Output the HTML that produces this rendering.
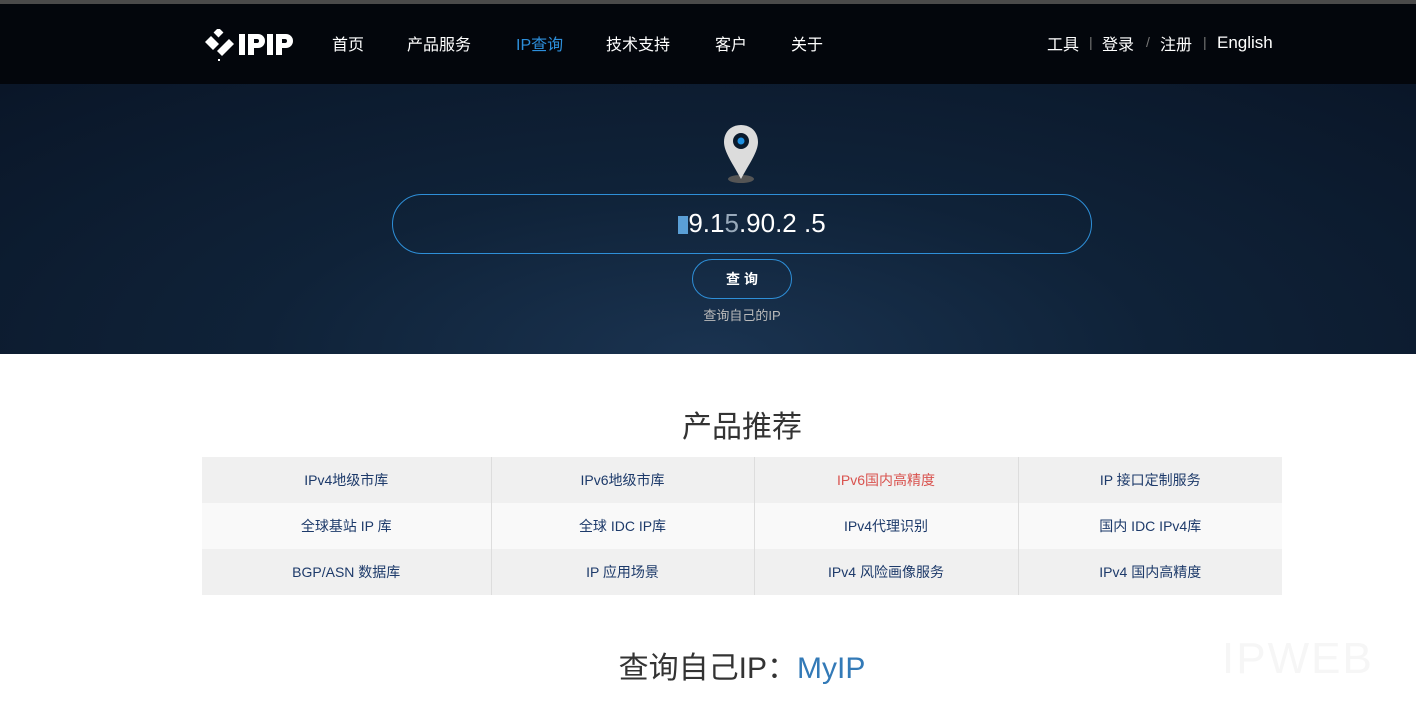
<!DOCTYPE html>
<html><head><meta charset="utf-8"><style>
*{margin:0;padding:0;box-sizing:border-box}
body{width:1416px;height:705px;overflow:hidden;background:#fff;font-family:"Liberation Sans","Noto Sans CJK SC",sans-serif;position:relative}
.top{position:absolute;left:0;top:0;width:1416px;height:4px;background:#4a4a4a}
.nav{position:absolute;left:0;top:4px;width:1416px;height:80px;background:#03060c}
.hero{position:absolute;left:0;top:84px;width:1416px;height:270px;background:radial-gradient(ellipse at 50% 100%,#1a3350 0%,#0f2238 45%,#0a1628 100%)}
.nav a{position:absolute;top:27px;color:#fff;font-size:16px;text-decoration:none}
.logo{position:absolute;left:203px;top:25px}
.r a{position:absolute;top:27px;color:#fff;font-size:16px}
.r a.en{top:29px;font-size:17px}
.sep{position:absolute;top:30px;color:#777;font-size:14px}
.search{position:absolute;left:392px;top:194px;width:700px;height:60px;border:1px solid #2e8fd8;border-radius:30px}
.ip{position:absolute;left:212px;width:1080px;top:208px;text-align:center;color:#fff;font-size:26px}
.btn{position:absolute;left:692px;top:259px;width:100px;height:40px;border:1px solid #2e8fd8;border-radius:20px;color:#fff;font-size:14px;font-weight:bold;text-align:center;line-height:38px;letter-spacing:4px;padding-left:4px}
.my{position:absolute;left:202px;width:1080px;top:305px;text-align:center;color:#bbb;font-size:13px}
h2{position:absolute;left:202px;width:1080px;top:402px;text-align:center;font-weight:normal;font-size:30px;color:#333}
table{position:absolute;left:202px;top:457px;width:1080px;border-collapse:collapse}
td{height:46px;text-align:center;font-size:14px;color:#1d3a6a;border-right:1px solid #ddd}
td:last-child{border-right:none}
tr:nth-child(odd){background:#f0f0f0}tr:nth-child(even){background:#f9f9f9}
.myip{position:absolute;left:202px;width:1080px;top:643px;text-align:center;font-size:30px;color:#333}
</style></head><body>
<div class="top"></div>
<div class="nav">
<svg class="logo" width="92" height="32" viewBox="0 0 92 32"><g fill="#fff"><rect x="12" y="0" width="7" height="7" transform="rotate(45 15.5 3.5)"/><path d="M2 13l6-6 8 8-6 6z"/><path d="M14 22l12-12 5 5-12 12z"/><rect x="15" y="30" width="2" height="2"/><rect x="36" y="5" width="6" height="21"/><path d="M45 5h10a7 7 0 0 1 0 14h-4v7h-6zM51 10v4h3a2 2 0 0 0 0-4z"/><rect x="64" y="5" width="6" height="21"/><path d="M73 5h10a7 7 0 0 1 0 14h-4v7h-6zM79 10v4h3a2 2 0 0 0 0-4z"/></g></svg>
<a style="left:332px">首页</a><a style="left:407px">产品服务</a><a style="left:516px;color:#2d8fdb">IP查询</a><a style="left:606px">技术支持</a><a style="left:715px">客户</a><a style="left:791px">关于</a>
<div class="r"><a style="left:1047px">工具</a><span class="sep" style="left:1089px">|</span><a style="left:1102px">登录</a><span class="sep" style="left:1146px">/</span><a style="left:1160px">注册</a><span class="sep" style="left:1203px">|</span><a class="en" style="left:1217px">English</a></div>
</div>
<div class="hero"></div>
<svg style="position:absolute;left:722px;top:124px" width="40" height="62" viewBox="0 0 40 62"><ellipse cx="19" cy="55" rx="13" ry="4" fill="#555"/><path d="M19 1C9 1 2 8 2 18c0 10 9 22 17 37 8-15 17-27 17-37C36 8 29 1 19 1z" fill="#dcdcdc"/><circle cx="19" cy="17" r="8" fill="#0b1a2c"/><circle cx="19" cy="17" r="3.5" fill="#1e90e0"/></svg>
<div class="search"></div>
<div class="ip"><span style="display:inline-block;width:10px;height:18px;background:#5a9fd6;vertical-align:-2px"></span>9.1<span style="color:#9ab">5</span>.90.2<span style="color:#68a"> </span>.5</div>
<div class="btn">查询</div>
<div class="my">查询自己的IP</div>
<h2>产品推荐</h2>
<table>
<tr><td style="width:289px">IPv4地级市库</td><td style="width:263px">IPv6地级市库</td><td style="width:264px;color:#d9534f">IPv6国内高精度</td><td>IP 接口定制服务</td></tr>
<tr><td>全球基站 IP 库</td><td>全球 IDC IP库</td><td>IPv4代理识别</td><td>国内 IDC IPv4库</td></tr>
<tr><td>BGP/ASN 数据库</td><td>IP 应用场景</td><td>IPv4 风险画像服务</td><td>IPv4 国内高精度</td></tr>
</table>
<div class="myip">查询自己IP：<span style="color:#337ab7">MyIP</span></div>
<div style="position:absolute;left:1222px;top:634px;font-size:44px;color:#f6f6f6;letter-spacing:2px">IPWEB</div>
</body></html>
